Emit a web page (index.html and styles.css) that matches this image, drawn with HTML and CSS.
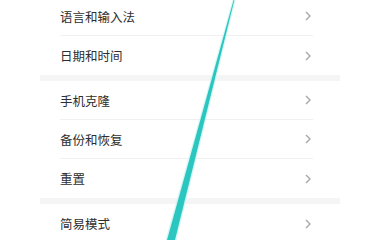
FILE: index.html
```html
<!DOCTYPE html>
<html lang="zh-CN">
<head>
<meta charset="utf-8">
<title>设置</title>
<link rel="stylesheet" href="styles.css">
</head>
<body>
<div class="screen">
  <div class="list">
    <div class="group">
      <div class="row"><span class="label">语言和输入法</span><svg class="chev" viewBox="0 0 6 10"><polyline points="1,1 5,5 1,9"/></svg></div>
      <div class="row"><span class="label">日期和时间</span><svg class="chev" viewBox="0 0 6 10"><polyline points="1,1 5,5 1,9"/></svg></div>
    </div>
    <div class="group">
      <div class="row"><span class="label">手机克隆</span><svg class="chev" viewBox="0 0 6 10"><polyline points="1,1 5,5 1,9"/></svg></div>
      <div class="row"><span class="label">备份和恢复</span><svg class="chev" viewBox="0 0 6 10"><polyline points="1,1 5,5 1,9"/></svg></div>
      <div class="row"><span class="label">重置</span><svg class="chev" viewBox="0 0 6 10"><polyline points="1,1 5,5 1,9"/></svg></div>
    </div>
    <div class="group">
      <div class="row"><span class="label">简易模式</span><svg class="chev" viewBox="0 0 6 10"><polyline points="1,1 5,5 1,9"/></svg></div>
    </div>
  </div>
  <svg class="stroke" viewBox="0 0 369 240" width="369" height="240">
    <polygon class="glow" points="232.5,0 235.5,0 176.5,240 165.5,240"/>
    <polygon class="line" points="233.6,0 234.4,0 175,240 167,240"/>
  </svg>
</div>
</body>
</html>
```

FILE: styles.css
```css
html, body {
  margin: 0;
  padding: 0;
  background: #ffffff;
}

.screen {
  position: relative;
  width: 369px;
  height: 240px;
  overflow: hidden;
  font-family: "Noto Sans CJK SC", "Noto Sans", sans-serif;
}

.list {
  margin: -3px 0 0 40px;
  width: 300px;
  background: #f5f5f5;
}

.group {
  background: #ffffff;
}

.group + .group {
  margin-top: 6px;
}

.row {
  box-sizing: border-box;
  height: 39px;
  margin: 0 27px 0 20px;
  display: flex;
  align-items: center;
  justify-content: space-between;
  border-bottom: 1px solid #f0f0f0;
}

.row:last-child {
  border-bottom: none;
}

.label {
  font-size: 12.5px;
  color: #2e2e2e;
  letter-spacing: 0;
}

.chev {
  width: 6px;
  height: 10px;
  margin-right: 2px;
}

.chev polyline {
  fill: none;
  stroke: #acacac;
  stroke-width: 1.5;
}

.stroke {
  position: absolute;
  left: 0;
  top: 0;
}

.stroke .glow {
  fill: #c6f3f0;
  opacity: 0.7;
}

.stroke .line {
  fill: #2cc6c0;
}
```
